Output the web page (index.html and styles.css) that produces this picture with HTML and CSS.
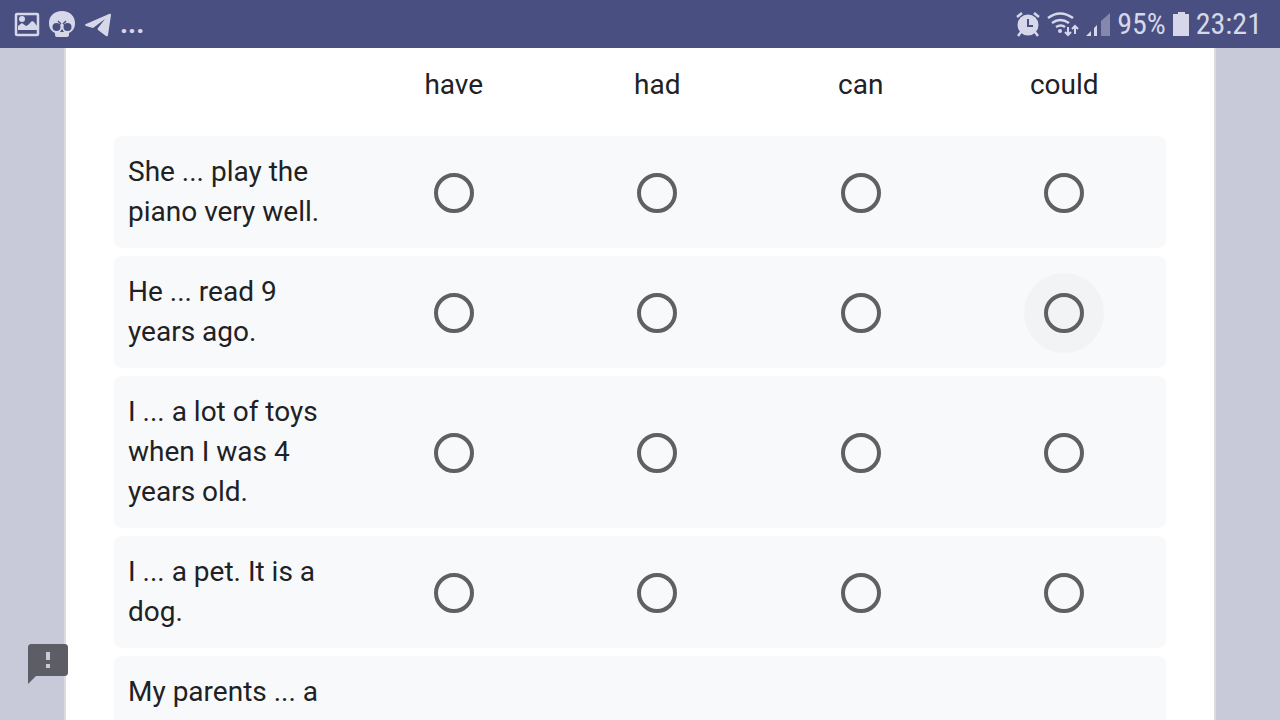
FILE: index.html
```html
<!DOCTYPE html>
<html lang="en">
<head>
    <meta charset="UTF-8">
    <meta name="viewport" content="width=device-width, initial-scale=1.0">
    <title>Form</title>
    <link rel="stylesheet" href="styles.css">
</head>
<body>
    <header class="status-bar">
        <div class="status-left">
            <svg width="26" height="26" viewBox="0 0 26 26" aria-hidden="true">
                <path fill="none" stroke="currentColor" stroke-width="2.5" d="M3 3h20q1 0 1 1v19q0 1-1 1H3q-1 0-1-1V4q0-1 1-1z"/>
                <path fill="currentColor" d="M4 19v-4l4-3 4 3 2-1 4-4 2 1 3 4v4z"/>
                <circle cx="8" cy="8" r="3" fill="currentColor"/>
            </svg>
            <svg width="28" height="28" viewBox="0 0 28 28" aria-hidden="true">
                <path fill="currentColor" d="M14 1C6 1 1 6 1 13c0 5 2 8 6 10v2q0 2 2 2h10q2 0 2-2v-2c4-2 6-5 6-10C27 6 22 1 14 1z"/>
                <circle cx="8.5" cy="17" r="4" fill="#494f80"/>
                <circle cx="19.500" cy="17" r="4" fill="#494f80"/>
                <path fill="#494f80" d="M14 19l-2 3h4z"/>
                <path stroke="#494f80" stroke-width="1.4" fill="none" d="M10 11l3 3M18 11l-3 3M11 15l2-2M17 15l-2-2"/>
            </svg>
            <svg width="28" height="26" viewBox="0 0 28 26" aria-hidden="true">
                <path fill="currentColor" d="M25 3q2-1 2 1l-3 20q0 2-2 1l-8-6q-1-1 0-2l7-9L9 17l-7-2q-2-1 0-2z"/>
            </svg>
            <span class="more">...</span>
        </div>
        <div class="status-right">
            <svg width="26" height="26" viewBox="0 0 26 26" aria-hidden="true">
                <circle cx="13" cy="14" r="10.5" fill="currentColor"/>
                <path stroke="currentColor" stroke-width="2.5" fill="none" d="M2 6l5-4M24 6l-5-4M6 21l-3 4M20 21l3 4"/>
                <path stroke="#494f80" stroke-width="2" fill="none" d="M13 8v7h5"/>
            </svg>
            <svg width="32" height="26" viewBox="0 0 32 26" aria-hidden="true">
                <path fill="none" stroke="currentColor" stroke-width="2.5" d="M1 7Q13-2 26 7M5 12q8-6 17 0M9 16q5-3 9 0"/>
                <circle cx="13" cy="20" r="2" fill="currentColor"/>
                <path stroke="currentColor" stroke-width="2" fill="none" d="M21 16v8M18 21l3 3 3-3M28 23v-8M25 18l3-3 3 3"/>
            </svg>
            <svg width="26" height="26" viewBox="0 0 26 26" aria-hidden="true">
                <path fill="currentColor" d="M1 25l5-5v5zM9 25V17l3-3v11z"/>
                <path fill="#8488ac" d="M16 25V10l9-8v23z"/>
            </svg>
            <span>95%</span>
            <svg width="18" height="26" viewBox="0 0 18 26" aria-hidden="true">
                <path fill="currentColor" d="M6 1h7v2h4v22H1V3h5z"/>
            </svg>
            <time>23:21</time>
        </div>
    </header>

    <main>
        <div class="form-card">
            <div class="grid-row grid-head">
                <span></span>
                <span id="c1">have</span>
                <span id="c2">had</span>
                <span id="c3">can</span>
                <span id="c4">could</span>
            </div>

            <div class="grid-row question" role="radiogroup" aria-labelledby="q1">
                <span class="question-text" id="q1">She ... play the piano very well.</span>
                <input type="radio" name="q1" aria-labelledby="q1 c1">
                <input type="radio" name="q1" aria-labelledby="q1 c2">
                <input type="radio" name="q1" aria-labelledby="q1 c3">
                <input type="radio" name="q1" aria-labelledby="q1 c4">
            </div>
            <div class="grid-row question" role="radiogroup" aria-labelledby="q2">
                <span class="question-text" id="q2">He ... read 9 years ago.</span>
                <input type="radio" name="q2" aria-labelledby="q2 c1">
                <input type="radio" name="q2" aria-labelledby="q2 c2">
                <input type="radio" name="q2" aria-labelledby="q2 c3">
                <input type="radio" name="q2" class="active" aria-labelledby="q2 c4">
            </div>
            <div class="grid-row question" role="radiogroup" aria-labelledby="q3">
                <span class="question-text" id="q3">I ... a lot of toys when I was 4 years old.</span>
                <input type="radio" name="q3" aria-labelledby="q3 c1">
                <input type="radio" name="q3" aria-labelledby="q3 c2">
                <input type="radio" name="q3" aria-labelledby="q3 c3">
                <input type="radio" name="q3" aria-labelledby="q3 c4">
            </div>
            <div class="grid-row question" role="radiogroup" aria-labelledby="q4">
                <span class="question-text" id="q4">I ... a pet. It is a dog.</span>
                <input type="radio" name="q4" aria-labelledby="q4 c1">
                <input type="radio" name="q4" aria-labelledby="q4 c2">
                <input type="radio" name="q4" aria-labelledby="q4 c3">
                <input type="radio" name="q4" aria-labelledby="q4 c4">
            </div>
            <div class="grid-row question question-last">
                <span class="question-text">My parents ... a</span>
            </div>
        </div>
    </main>

    <button class="report" type="button" aria-label="Report a problem">
        <svg width="48" height="48" viewBox="0 0 24 24" aria-hidden="true">
            <path fill="currentColor" fill-rule="evenodd" d="M20.500 2h-17C2.700 2 2 2.700 2 3.500V22l4-4h14.500c.8 0 1.500-.7 1.500-1.500v-13c0-.8-.7-1.500-1.500-1.500zM13 14h-2v-2h2zm0-4h-2V6h2z"/>
        </svg>
    </button>
</body>
</html>
```
FILE: styles.css
```css
* {
    box-sizing: border-box;
}
body {
    margin: 0;
    height: 100vh;
    display: flex;
    flex-direction: column;
    background-color: #c8c9d9;
    color: #202124;
    font-family: Roboto, sans-serif;
    font-size: 28px;
    line-height: 40px;
}

/* phone status bar */
.status-bar {
    flex: none;
    display: flex;
    justify-content: space-between;
    height: 48px;
    padding: 0 18px 0 14px;
    background-color: #494f80;
    color: #d6d8ea;
}
.status-left,
.status-right {
    display: flex;
    align-items: center;
}
.status-left {
    gap: 8px;
}
.more {
    font-weight: bold;
}
.status-right {
    gap: 6px;
    font-family: "Roboto Condensed", Roboto, sans-serif;
    font-size: 30px;
}

/* question card */
main {
    flex: 1;
    min-height: 0;
    overflow: hidden;
}
.form-card {
    width: 90%;
    margin: 0 auto;
    padding: 0 48px;
    border: solid #dadce0;
    border-width: 0 2px;
    background-color: #fff;
}
.grid-row {
    display: grid;
    grid-template-columns: 238px repeat(4, 1fr);
    align-items: center;
    justify-items: center;
}
.grid-head {
    padding: 17px 0 31px;
}
.question {
    margin-bottom: 8px;
    padding: 16px 0;
    border-radius: 8px;
    background-color: #f8f9fa;
}
.question-text {
    justify-self: stretch;
    padding: 0 14px;
}
.question-last {
    min-height: 192px;
    margin-bottom: 0;
    align-items: start;
}
input[type="radio"] {
    appearance: none;
    width: 40px;
    height: 40px;
    margin: 2px 0 0;
    border: 4px solid #5f6062;
    border-radius: 50%;
    cursor: pointer;
}
input[type="radio"]:checked {
    background: radial-gradient(#5f6062 50%, transparent 52%);
}
input[type="radio"].active {
    background-color: #f2f3f4;
    box-shadow: 0 0 0 20px #f2f3f4;
}

.report {
    position: fixed;
    left: 24px;
    bottom: 32px;
    padding: 0;
    border: none;
    background: none;
    color: #5d5e65;
    line-height: 0;
    cursor: pointer;
}
```
